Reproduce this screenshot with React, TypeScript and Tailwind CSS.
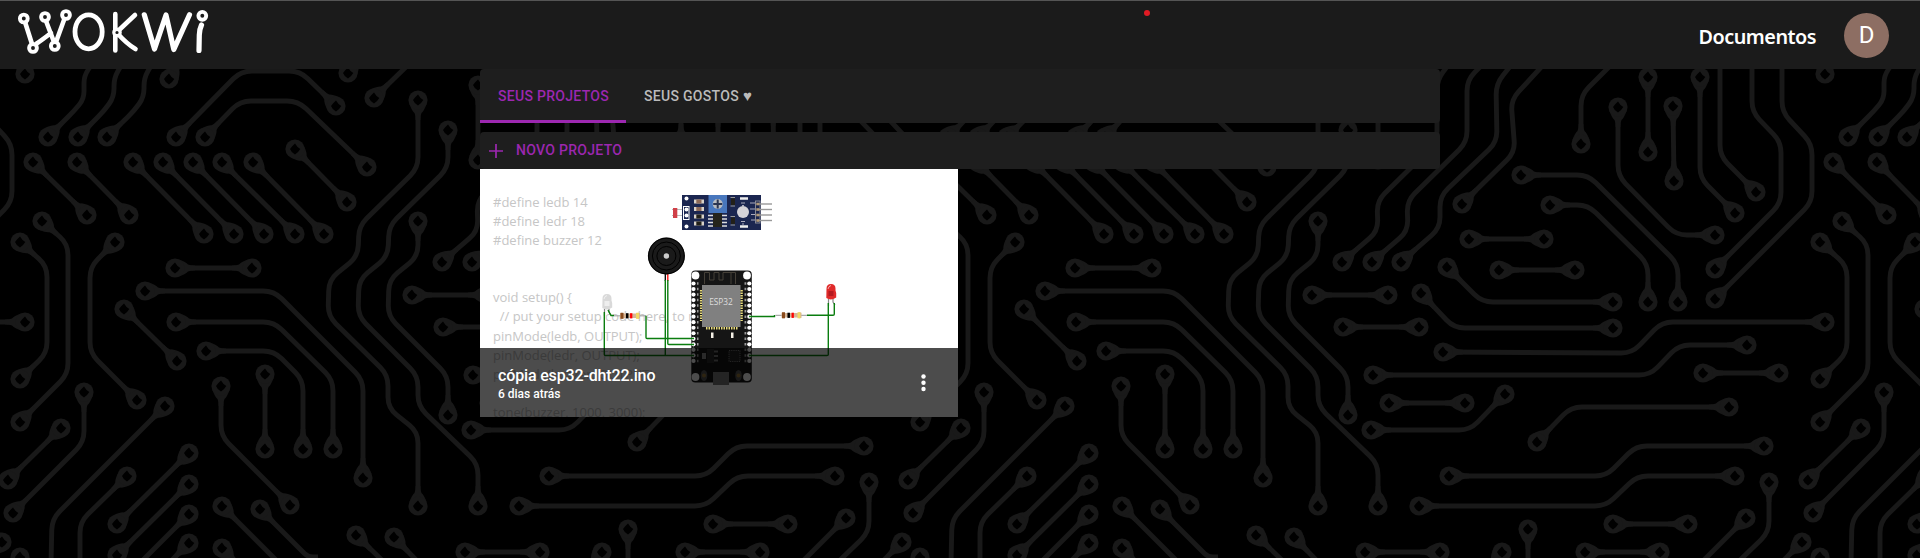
import React from "react";

type Trace = { p: number[]; a?: boolean; b?: boolean };

// Each trace is a polyline x,y,x,y…; a / b = false leaves out the pad at that end.
const TRACES: Trace[] = [
  { p: [25, 74, 25, 73], b: false },
  { p: [48, 137, 74, 111, 84, 99, 84, 76, 92, 64], b: false },
  { p: [78, 137, 104, 111, 114, 97, 114, 78, 122, 64], b: false },
  { p: [107, 137, 134, 111, 144, 97, 144, 78, 152, 64], b: false },
  { p: [169, 79, 178, 66], b: false },
  { p: [176, 137, 241, 71, 300, 71, 336, 106] },
  { p: [205, 137, 240, 101, 298, 101, 367, 167] },
  { p: [348, 73, 356, 62], b: false },
  { p: [374, 98, 408, 65], b: false },
  { p: [418, 100, 418, 168, 359, 226, 358, 256, 329, 280, 328, 316, 388, 375, 388, 408, 418, 432, 418, 506] },
  { p: [448, 130, 448, 168, 389, 226, 388, 256, 359, 280, 358, 316, 418, 376, 418, 406, 478, 464, 478, 506] },
  { p: [418, 221, 418, 256, 389, 280, 388, 316, 448, 376, 448, 415] },
  { p: [478, 85, 478, 160] },
  { p: [33, 162, 87, 215] },
  { p: [77, 162, 129, 215] },
  { p: [133, 162, 204, 234] },
  { p: [163, 162, 234, 234] },
  { p: [193, 162, 264, 234] },
  { p: [222, 162, 295, 234] },
  { p: [253, 162, 324, 234] },
  { p: [295, 149, 347, 202] },
  { p: [42, 221, 68, 244, 68, 374, 20, 422] },
  { p: [20, 242, 47, 266, 47, 353, 20, 379] },
  { p: [115, 242, 90, 267, 90, 353, 137, 400] },
  { p: [175, 268, 252, 268] },
  { p: [145, 291, 274, 291, 363, 380, 363, 478] },
  { p: [124, 309, 177, 361] },
  { p: [176, 322, 274, 322, 333, 380, 333, 449] },
  { p: [206, 351, 274, 351, 303, 380, 303, 449] },
  { p: [265, 374, 265, 449] },
  { p: [221, 386, 221, 436, 290, 505] },
  { p: [165, 406, 52, 519, 51, 564], b: false },
  { p: [84, 392, 84, 442, 13, 513] },
  { p: [61, 428, 8, 480] },
  { p: [127, 476, 80, 522, 80, 564], b: false },
  { p: [189, 453, 117, 524] },
  { p: [189, 484, 117, 555] },
  { p: [189, 514, 139, 564], b: false },
  { p: [189, 543, 168, 564], b: false },
  { p: [222, 506, 280, 564], b: false },
  { p: [260, 509, 308, 557, 318, 557], b: false },
  { p: [222, 548, 238, 564], b: false },
  { p: [356, 535, 386, 564], b: false },
  { p: [394, 537, 420, 564], b: false },
  { p: [20, 557, 20, 570], b: false },
  { p: [442, 262, 478, 231, 477, 201, 537, 142, 537, 80, 549, 64], b: false },
  { p: [472, 262, 508, 231, 507, 201, 567, 142, 567, 80, 583, 64], b: false },
  { p: [501, 262, 540, 228, 540, 196, 597, 142, 596, 84, 612, 64], b: false },
  { p: [562, 204, 615, 152, 611, 100, 644, 64], b: false },
  { p: [412, 295, 488, 295] },
  { p: [443, 327, 519, 327] },
  { p: [521, 293, 554, 328, 713, 328] },
  { p: [547, 267, 582, 302, 713, 302] },
  { p: [543, 352, 732, 353, 762, 322, 925, 322] },
  { p: [473, 375, 750, 375, 779, 345, 847, 345] },
  { p: [489, 403, 565, 403] },
  { p: [471, 430, 570, 430, 605, 394] },
  { p: [621, 175, 688, 175, 778, 264, 778, 302] },
  { p: [650, 205, 688, 205, 748, 264, 748, 302] },
  { p: [569, 239, 644, 239] },
  { p: [599, 270, 675, 270] },
  { p: [681, 144, 681, 95, 712, 64], b: false },
  { p: [718, 107, 718, 176, 776, 235, 815, 235] },
  { p: [748, 77, 748, 152] },
  { p: [773, 106, 774, 181] },
  { p: [800, 77, 800, 178, 835, 213] },
  { p: [820, 60, 820, 156, 856, 192], a: false },
  { p: [852, 60, 852, 112, 881, 142, 881, 203, 815, 269], a: false },
  { p: [882, 60, 882, 112, 912, 144, 912, 202, 815, 299], a: false },
  { p: [803, 373, 879, 373] },
  { p: [637, 442, 671, 407, 829, 407] },
  { p: [549, 476, 706, 476, 736, 446, 864, 446] },
  { p: [519, 506, 706, 506, 737, 476, 835, 476] },
  { p: [713, 524, 788, 524] },
  { p: [685, 552, 760, 552] },
  { p: [628, 529, 628, 564], b: false },
  { p: [602, 552, 592, 564], b: false },
  { p: [869, 482, 869, 532, 836, 564], b: false },
  { p: [846, 518, 800, 564], b: false },
  { p: [902, 542, 880, 564], b: false },
  { p: [465, 552, 540, 552] },
];

function roundedPath(p: number[]) {
  const n = p.length / 2;
  let d = `M${p[0]} ${p[1]}`;
  for (let i = 1; i < n - 1; i++) {
    const [px, py, x, y, nx, ny] = p.slice(2 * i - 2, 2 * i + 4);
    const l1 = Math.hypot(px - x, py - y);
    const l2 = Math.hypot(nx - x, ny - y);
    const r = Math.min(11, l1 / 2, l2 / 2);
    d += `L${x + ((px - x) * r) / l1} ${y + ((py - y) * r) / l1}`;
    d += `Q${x} ${y} ${x + ((nx - x) * r) / l2} ${y + ((ny - y) * r) / l2}`;
  }
  return d + `L${p[2 * n - 2]} ${p[2 * n - 1]}`;
}

function Pad({ x, y, tx, ty }: { x: number; y: number; tx: number; ty: number }) {
  const angle = (Math.atan2(ty - y, tx - x) * 180) / Math.PI;
  return (
    <g transform={`translate(${x} ${y})`}>
      <path transform={`rotate(${angle})`} d="M4 -8.6Q11 -6 13 -3.5Q15 -2.4 20 -2.4V2.4Q15 2.4 13 3.5Q11 6 4 8.6Z" fill="#191919" />
      <circle r="9.6" fill="#191919" />
      <path d="M0 -5.6Q2 -2 5.3 0Q3 4 0 5.4Q-3.5 4 -5 0Q-3 -3 0 -5.6Z" fill="#000" />
    </g>
  );
}

function Circuit() {
  return (
    <svg className="absolute inset-0" width="1920" height="558">
      <defs>
        <g id="tile">
          {TRACES.map(({ p, a, b }, i) => {
            const n = p.length;
            return (
              <g key={i}>
                <path d={roundedPath(p)} fill="none" stroke="#191919" strokeWidth="4.9" />
                {a !== false && <Pad x={p[0]} y={p[1]} tx={p[2]} ty={p[3]} />}
                {b !== false && <Pad x={p[n - 2]} y={p[n - 1]} tx={p[n - 4]} ty={p[n - 3]} />}
              </g>
            );
          })}
        </g>
      </defs>
      {[-900, 0, 900, 1800].map((x) => (
        <use key={x} href="#tile" x={x} />
      ))}
    </svg>
  );
}

function Logo() {
  return (
    <svg width="240" height="68" viewBox="0 1 240 68" fill="none" stroke="#fff" strokeWidth="4.6" strokeLinecap="round" strokeLinejoin="round" aria-label="Wokwi">
      <path d="M25 22L32 44M36 44Q42 40 51 33M46 21L54 42M64 20L56 42" />
      <ellipse cx="88.6" cy="31.8" rx="13.6" ry="17" strokeWidth="4.8" />
      <path d="M115.3 14V50.5M135 15L118 31M118 34Q127 44 135.5 49" />
      <path d="M144.300 14.800L154.500 49L166 15L173.800 49.500L189.500 14.800" strokeWidth="5.200" />
      <path d="M201.500 25Q199.500 29 199.300 35L199 50.500" strokeWidth="5.200" />
      <g fill="#1b1b1b" strokeWidth="3.900">
        <circle cx="23.800" cy="18.500" r="3.900" />
        <circle cx="45" cy="17" r="3.900" />
        <circle cx="66" cy="15" r="3.900" />
        <circle cx="33" cy="48" r="3.900" />
        <circle cx="54.800" cy="46" r="3.900" />
        <circle cx="117" cy="32.500" r="3.200" strokeWidth="3.200" />
        <circle cx="202.300" cy="15.800" r="3.900" />
      </g>
    </svg>
  );
}

function Resistor({ x, y }: { x: number; y: number }) {
  return (
    <g transform={`translate(${x} ${y})`}>
      <path d="M-16 0H16" stroke="#aaa" strokeWidth="1.2" />
      <path d="M-10 -2.500Q-8 -3.500 -6 -2.300H6Q8 -3.500 10 -2.500V2.500Q8 3.500 6 2.300H-6Q-8 3.500 -10 2.500Z" fill="#d5b597" />
      <path d="M-8 -3V3" stroke="#8b4b1c" strokeWidth="3" />
      <path d="M-2.800 -2.600V2.600" stroke="#000" strokeWidth="2.500" />
      <path d="M1.200 -2.600V2.600" stroke="#f00" strokeWidth="2.300" />
      <path d="M7.500 -3V3" stroke="#f1d863" strokeWidth="3" />
    </g>
  );
}

function Led({ x, y, body, dark }: { x: number; y: number; body: string; dark: string }) {
  return (
    <g transform={`translate(${x} ${y})`}>
      <path d="M-2.500 7V14M2 7V10L4 13" stroke="#888" strokeWidth="1.200" fill="none" />
      <path d="M-4.500 -3.500Q-4.500 -8 0 -8T4.500 -3.500V-1.500L5.200 1V5.500Q0 9 -4.700 6Z" fill={body} />
      <path d="M-2.500 -1H2.500V4H-2.500Z" fill={dark} />
      <path d="M-3 -3Q-2.500 -6 0 -6.500" stroke="#fff" strokeOpacity=".6" fill="none" />
    </g>
  );
}

function LightSensor() {
  return (
    <g>
      <path d="M672 209.500H686M672 215.500H686" stroke="#bbb" />
      <rect x="673" y="208" width="4.300" height="10" fill="#d04048" />
      <rect x="682" y="195" width="79" height="35" fill="#1b2650" />
      <rect x="683.500" y="206.500" width="5.500" height="13" fill="none" stroke="#fff" />
      {[198.500, 209.500, 215.500, 226.500].map((y) => (
        <circle key={y} cx="686.500" cy={y} r="2" fill="#fff" />
      ))}
      {[201.500, 209, 216.500, 223.500].map((y, i) => (
        <g key={y}>
          <rect x="694" y={y - 2} width="10" height="4" fill="#d9d2c8" />
          <rect x="696.300" y={y - 2} width="5.200" height="4" fill={i < 2 ? "#8d6a58" : "#222019"} />
        </g>
      ))}
      <rect x="708.500" y="195" width="18.500" height="18" fill="#4877bd" />
      <circle cx="717.700" cy="204" r="5" fill="#b9bcc0" />
      <path d="M717.700 199.500V208.500M713.200 204H722.200" stroke="#2b3550" strokeWidth="2" />
      {[215.500, 219, 222.500, 226].map((y) => (
        <path key={y} d={`M708 ${y}H727`} stroke="#ddd" strokeWidth="1.500" />
      ))}
      <rect x="713" y="213" width="9" height="14" fill="#25241c" />
      <path d="M730.500 197.500H735M730.500 206H735M730.500 216.500H735M730.500 225H735" stroke="#999" />
      <path d="M731 198.500H735V205H731ZM731 217.500H735V224H731Z" fill="#222019" />
      <path d="M740 198.500H748M740 226.500H748" stroke="#eee" strokeWidth="2.600" />
      <path d="M741 203H745M742 205.500H744M741 221.500H745M742 224H744M750 203H755M750 209H755M751 214.500H755M751 220H755" stroke="#aab" />
      <circle cx="743" cy="212" r="6" fill="#d5d3d8" />
      <rect x="755.500" y="201" width="4.500" height="22" fill="none" stroke="#8a8a94" />
      {[204, 209.500, 215, 220.500].map((y) => (
        <g key={y}>
          <path d={`M758 ${y}H772`} stroke="#999" strokeWidth="1.400" />
          <rect x="756.300" y={y - 1.300} width="3" height="2.600" fill="#b39a77" />
        </g>
      ))}
    </g>
  );
}

function Esp32() {
  const pins = Array.from({ length: 15 }, (_, i) => 283.500 + i * 5.530);
  return (
    <g>
      <rect x="691.300" y="270.500" width="60.500" height="112" rx="4" fill="#151515" />
      <path d="M704.500 284V272.500H709.500V280H714V272.500H719V280H723V272.500H735.500V284M731 272.500V284" fill="none" stroke="#454038" />
      {[[695.500, 275.500], [747, 275.500], [695.500, 377], [747, 377]].map(([x, y]) => (
        <circle key={`${x}-${y}`} cx={x} cy={y} r="3.900" fill="#fff" />
      ))}
      {pins.map((y) => (
        <g key={y}>
          <circle cx="693.500" cy={y} r="2.100" fill="#fff" />
          <circle cx="749.300" cy={y} r="2.100" fill="#fff" />
          <path d={`M697 ${y}H698.500M744.500 ${y}H746.300`} stroke="#999" strokeWidth="2.500" />
        </g>
      ))}
      <path d="M701.200 290V321M741.500 290V321" stroke="#e8dc7c" strokeWidth="2.600" strokeDasharray="1.500 1" />
      <path d="M706 328.300H738" stroke="#e8dc7c" strokeWidth="2.600" strokeDasharray="1.500 1" />
      <rect x="702" y="285" width="38.500" height="42" fill="#808080" />
      <text x="721" y="304.500" textAnchor="middle" fontSize="8.300" fill="#ddd" className="font-['Open_Sans','Noto_Sans',sans-serif]">ESP32</text>
      <path d="M711 332.500H713.500V338H711ZM731 332.500H733.500V338H731Z" fill="#f4f0e6" />
      <rect x="707" y="349" width="7" height="14" fill="#2b2b2b" />
      <path d="M702 353H706V359H702Z" fill="#8e8e8e" />
      <path d="M714 351.500H718M714 356H718M714 360.500H718" stroke="#777" strokeWidth="2" />
      <rect x="729" y="350.500" width="11" height="11" fill="#222" stroke="#777" strokeDasharray="1.200 1" />
      <ellipse cx="704" cy="375.500" rx="3.300" ry="5.500" fill="#555" />
      <ellipse cx="738.500" cy="375.500" rx="3.300" ry="5.500" fill="#555" />
      <circle cx="704" cy="375.500" r="2" fill="#9a7b3a" />
      <circle cx="738.500" cy="375.500" r="2" fill="#9a7b3a" />
      <rect x="713" y="372" width="16" height="13" fill="#7b7b7b" />
    </g>
  );
}

function Schematic() {
  return (
    <svg className="absolute inset-0" width="478" height="248" viewBox="480 169 478 248">
      <LightSensor />
      <path d="M665.300 270V281" stroke="#000" strokeWidth="1.300" />
      <path d="M667.800 270V281" stroke="#f00" strokeWidth="1.300" />
      <circle cx="666.400" cy="256" r="18.500" fill="#1a1a1a" />
      <g fill="none" stroke="#000">
        <circle cx="666.400" cy="256" r="17.800" />
        <circle cx="666.400" cy="256" r="14" />
        <circle cx="666.400" cy="256" r="9.500" />
      </g>
      <circle cx="666.400" cy="256" r="2.700" fill="#ccc" />
      <Led x={607} y={302} body="#d9d9d9" dark="#eee" />
      <Led x={831} y={292} body="#e02a2a" dark="#b51a20" />
      <Resistor x={630} y={315.800} />
      <Resistor x={791.500} y={315.300} />
      <Esp32 />
      <g fill="none" stroke="#0a7d0f" strokeWidth="1.400">
        <path d="M604.300 312V354.500Q604.300 355.500 605.500 355.500H694" />
        <path d="M608 310L611 315.500H614" />
        <path d="M646 315.800V337.500Q646 338.500 647 338.500H694" />
        <path d="M665.300 280V355.500" />
        <path d="M667.800 280V343.500Q667.800 344.500 668.800 344.500H694" />
        <path d="M749 316.500H774.500V315" />
        <path d="M807 315.300H833Q834.300 315.300 834.300 314V303" />
        <path d="M828.300 303V354.500Q828.300 355.500 827 355.500H749" />
      </g>
    </svg>
  );
}

const CODE = `#define ledb 14
#define ledr 18
#define buzzer 12


void setup() {
  // put your setup code here, to run once:
pinMode(ledb, OUTPUT);
pinMode(ledr, OUTPUT);
pinMode(buzzer, OUTPUT);

tone(buzzer, 1000, 3000);`;

export default function App() {
  return (
    <div className="relative flex h-[558px] w-[1920px] flex-col overflow-hidden bg-black font-['Roboto',sans-serif]">
      <Circuit />
      <header className="relative flex h-[69px] shrink-0 items-center justify-between border-t border-[#555] bg-[#1b1b1b] pr-[31px]">
        <Logo />
        <div className="flex items-center gap-[28px]">
          <a className="pt-[3px] font-['Noto_Sans',sans-serif] text-[19.8px] font-semibold tracking-[-0.5px] text-white">Documentos</a>
          <div className="flex size-[45px] items-center justify-center rounded-full bg-[#8d6e63] text-[24px] text-white">D</div>
        </div>
        <span className="absolute top-[9px] left-[1144px] size-[6px] rounded-full bg-[#e01b24]" />
      </header>

      <main className="relative mx-auto flex w-[960px] flex-col">
        <nav className="flex h-[54px] rounded bg-[#1e1e1e] text-[14px] font-medium tracking-[0.3px]">
          <div className="flex w-[146px] items-center border-b-[3px] border-[#9c27b0] pt-[4px] pl-[18px] text-[#9c27b0]">SEUS PROJETOS</div>
          <div className="flex items-center gap-[4px] border-b-[3px] border-transparent pt-[4px] pl-[18px] text-[#bbb]">
            SEUS GOSTOS <span className="text-[15px] font-bold tracking-normal">♥</span>
          </div>
        </nav>
        <div className="mt-[9px] flex h-[37px] items-center rounded bg-[#1e1e1e] pl-[9px] text-[14px] font-medium tracking-[0.3px] text-[#9c27b0]">
          <svg width="14" height="14" stroke="currentColor" strokeWidth="1.700">
            <path d="M7 0V14M0 7H14" />
          </svg>
          <span className="ml-[13px]">NOVO PROJETO</span>
        </div>
        <article className="relative flex h-[248px] w-[478px] flex-col justify-end overflow-hidden bg-white">
          <pre className="absolute top-[23.5px] left-[13px] font-['Open_Sans','Noto_Sans',sans-serif] text-[13px] leading-[19.15px] text-[#c6c6c6]">{CODE}</pre>
          <Schematic />
          <footer className="relative flex h-[69px] items-center justify-between bg-black/70 pr-[32px] pl-[18px] text-white">
            <div className="pt-[3px]">
              <h2 className="text-[16px] leading-[20px] font-medium tracking-[-0.15px]">cópia esp32-dht22.ino</h2>
              <p className="text-[12px] leading-[16px] font-medium">6 dias atrás</p>
            </div>
            <svg width="5" height="18" fill="#fff">
              <circle cx="2.500" cy="2.500" r="2.200" />
              <circle cx="2.500" cy="8.800" r="2.200" />
              <circle cx="2.500" cy="15" r="2.200" />
            </svg>
          </footer>
        </article>
      </main>
    </div>
  );
}
